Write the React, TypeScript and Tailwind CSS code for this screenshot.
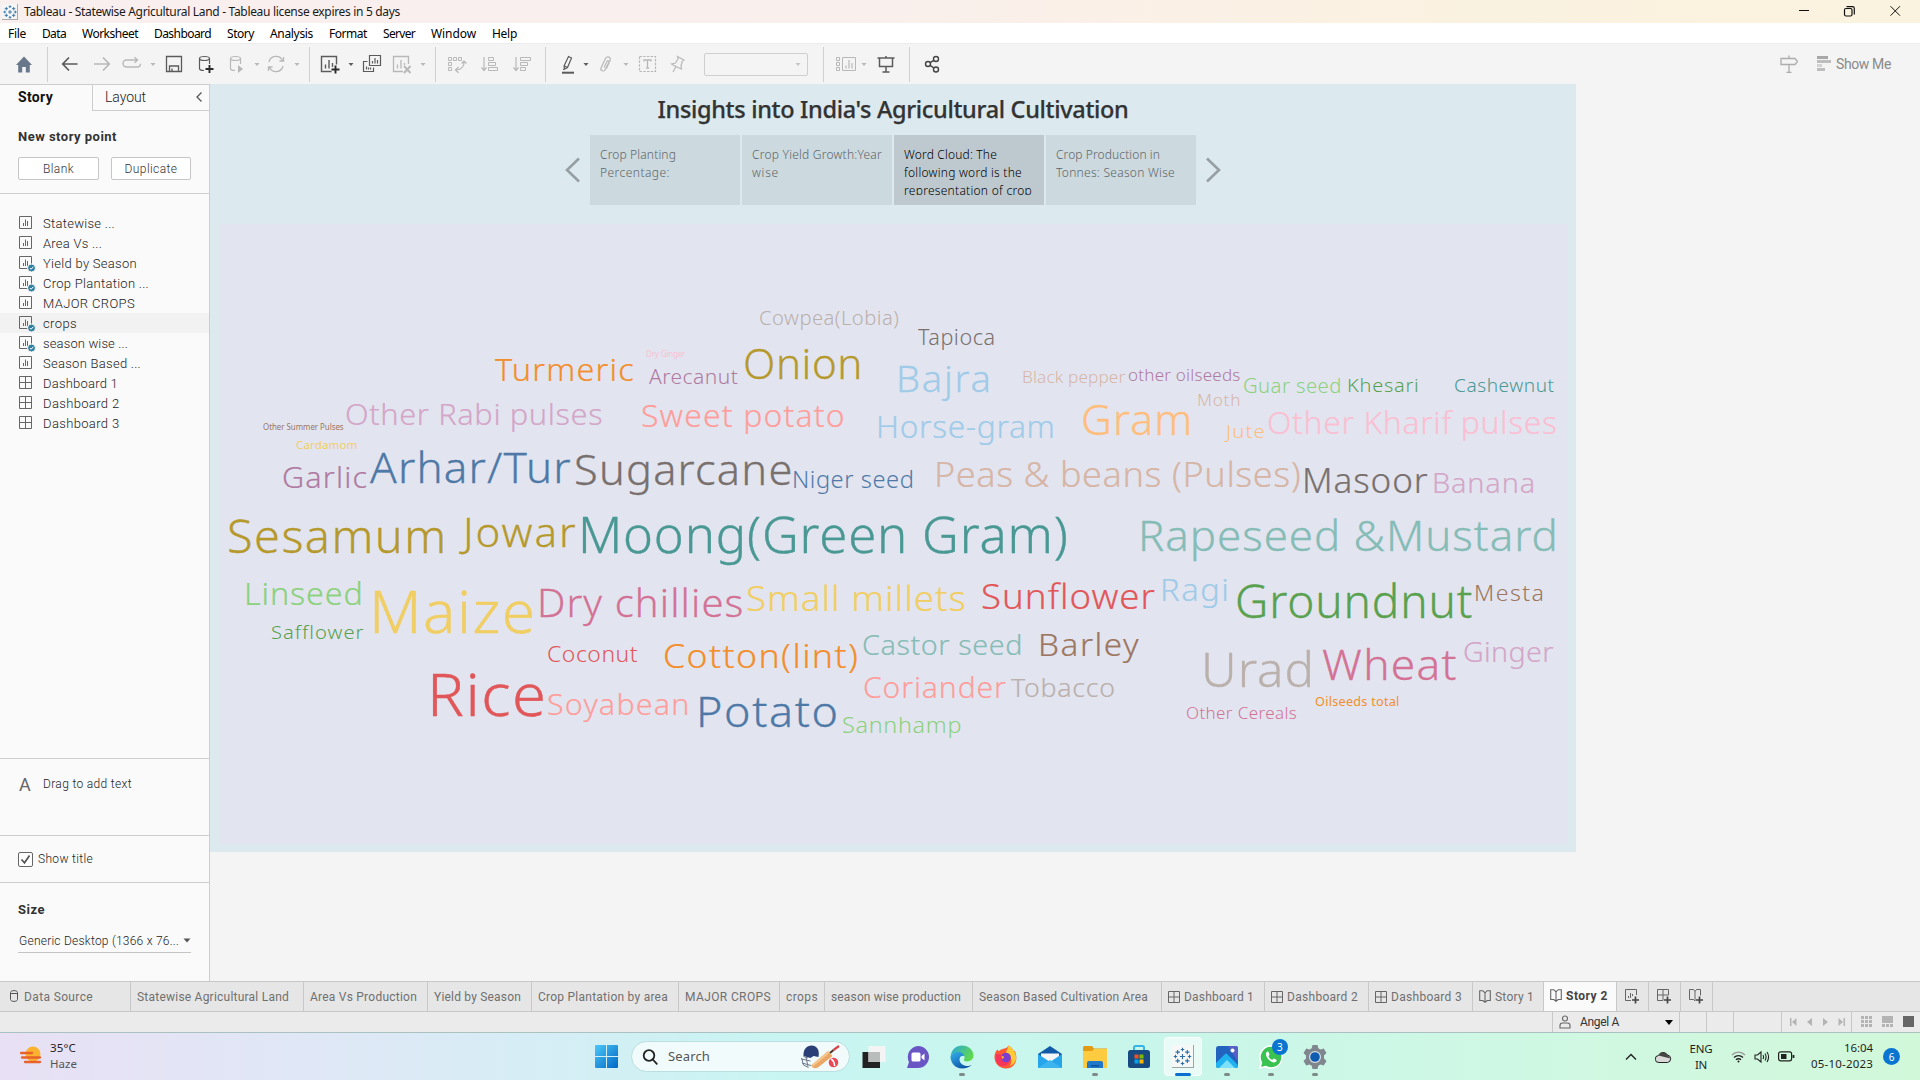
import React, { useLayoutEffect, useRef, useState } from "react";

/** Text tracked so that it fills exactly `w` pixels. */
function T({ w, className = "", children }: { w: number; className?: string; children: string }) {
  const ref = useRef<HTMLSpanElement>(null);
  const [ls, setLs] = useState(0);
  useLayoutEffect(() => {
    const el = ref.current;
    if (!el) return;
    el.style.letterSpacing = "0px";
    const nat = el.getBoundingClientRect().width;
    setLs((w - nat) / children.length);
  }, [w, children]);
  return (
    <span ref={ref} className={"inline-block w-max shrink-0 whitespace-pre " + className} style={{ letterSpacing: ls + "px" }}>
      {children}
    </span>
  );
}

/* ---------- word cloud ---------- */

type Word = [text: string, x0: number, x1: number, baseline: number, size: number, color: string];

const words: Word[] = [
  ["Cowpea(Lobia)", 759.6, 898, 325, 19.6, "#bab0ac"],
  ["Dry Ginger", 646, 686, 356.7, 8, "#fabfd2"],
  ["Turmeric", 495, 633, 381, 31, "#f28e2b"],
  ["Arecanut", 648.4, 737.2, 384, 20.5, "#b07aa1"],
  ["Onion", 744.4, 859, 379, 41.5, "#b6992d"],
  ["Other Rabi pulses", 346, 601.5, 425, 30, "#d4a6c8"],
  ["Sweet potato", 642, 843.5, 427, 30.5, "#ff9d9a"],
  ["Other Summer Pulses", 262.7, 343.5, 430, 8, "#9d7660"],
  ["Cardamom", 295.7, 356.4, 449, 11.5, "#f1ce63"],
  ["Garlic", 282.8, 366, 487, 29, "#b07aa1"],
  ["Arhar/Tur", 369.8, 570.7, 483, 42.5, "#4e79a7"],
  ["Sugarcane", 576, 790, 484.5, 42, "#79706e"],
  ["Niger seed", 794, 912, 488, 23, "#4e79a7"],
  ["Tapioca", 918, 993.8, 345, 21, "#79706e"],
  ["Bajra", 898.8, 988, 392, 36, "#a0cbe8"],
  ["Black pepper", 1023, 1125.5, 383, 17, "#d7b5a6"],
  ["other oilseeds", 1127.8, 1240.3, 381, 16.8, "#b07aa1"],
  ["Guar seed", 1243.4, 1339.8, 393, 19.8, "#8cd17d"],
  ["Khesari", 1347.4, 1416.6, 392, 19, "#59a14f"],
  ["Cashewnut", 1454.5, 1553.2, 392, 18.5, "#499894"],
  ["Moth", 1198.3, 1239.8, 406, 16.5, "#d7b5a6"],
  ["Horse-gram", 878.7, 1052.8, 438, 31, "#a0cbe8"],
  ["Gram", 1083, 1189, 435, 41.5, "#ffbe7d"],
  ["Jute", 1223.8, 1264, 438, 19, "#ffbe7d"],
  ["Other Kharif pulses", 1268, 1556.3, 434, 31, "#fabfd2"],
  ["Peas & beans (Pulses)", 936.7, 1299.6, 487, 35.3, "#d7b5a6"],
  ["Masoor", 1305, 1427, 493, 34.2, "#79706e"],
  ["Banana", 1434, 1533, 492, 28, "#d4a6c8"],
  ["Sesamum", 228.8, 442, 553, 45.5, "#b6992d"],
  ["Jowar", 458.7, 575.6, 547, 40, "#b6992d"],
  ["Moong(Green Gram)", 581.4, 1065.3, 554, 49.8, "#499894"],
  ["Rapeseed &Mustard", 1142, 1554, 552, 42.8, "#86bcb6"],
  ["Linseed", 247, 361, 605, 31.3, "#8cd17d"],
  ["Safflower", 272, 364, 639, 19, "#59a14f"],
  ["Maize", 373.8, 532.3, 633, 58.8, "#f1ce63"],
  ["Dry chillies", 539.5, 741.7, 617, 38.3, "#d37295"],
  ["Small millets", 747, 964, 611, 35.3, "#f1ce63"],
  ["Sunflower", 982, 1155, 609, 35.3, "#e15759"],
  ["Ragi", 1162.6, 1226, 601, 31, "#a0cbe8"],
  ["Groundnut", 1237, 1472, 617, 45, "#59a14f"],
  ["Mesta", 1476.4, 1542.5, 601, 21.7, "#9d7660"],
  ["Coconut", 548, 638, 662, 22.3, "#e15759"],
  ["Cotton(lint)", 665, 856.4, 668, 33.5, "#f28e2b"],
  ["Castor seed", 863, 1020.6, 654, 28, "#86bcb6"],
  ["Barley", 1040.7, 1138.5, 656, 31.3, "#9d7660"],
  ["Urad", 1205, 1310, 686, 48.3, "#bab0ac"],
  ["Wheat", 1322, 1456, 680, 43, "#d37295"],
  ["Ginger", 1463.5, 1552.8, 662, 28.3, "#d4a6c8"],
  ["Rice", 431.9, 542.6, 716, 59.7, "#e15759"],
  ["Soyabean", 548, 687, 714.5, 29, "#ff9d9a"],
  ["Potato", 700, 835.4, 727, 43, "#4e79a7"],
  ["Coriander", 863.6, 1005, 697, 29, "#ff9d9a"],
  ["Tobacco", 1010.4, 1113, 697, 26, "#bab0ac"],
  ["Sannhamp", 843, 960.8, 734, 22.7, "#8cd17d"],
  ["Other Cereals", 1186.7, 1295.6, 719, 16.5, "#d37295"],
  ["Oilseeds total", 1314.8, 1399, 706, 12.3, "#f28e2b"],
];

const measureCtx = document.createElement("canvas").getContext("2d")!;

/** A word whose ink spans x0..x1: part of the fit is glyph width, the rest tracking. */
function CloudWord({ word }: { word: Word }) {
  const [text, x0, x1, base, size, color] = word;
  const weight = size < 13 ? 400 : 300;
  measureCtx.font = `${weight} ${size}px "Noto Sans"`;
  const m = measureCtx.measureText(text);
  const ink = m.actualBoundingBoxLeft + m.actualBoundingBoxRight;
  const scale = 1 + ((x1 - x0) / ink - 1) * 0.4;
  const spacing = ((x1 - x0) / scale - ink) / (text.length - 1);
  return (
    <span
      className="absolute origin-left leading-none whitespace-pre"
      style={{
        left: x0 + 0.2 + m.actualBoundingBoxLeft * scale - 219,
        top: base + 0.5 - 0.888 * size - 224,
        fontSize: size,
        fontWeight: weight,
        letterSpacing: spacing,
        WebkitTextStroke: `${size > 24 ? size * 0.007 : 0}px ${color}`,
        transform: `scaleX(${scale})`,
        color,
      }}
    >
      {text}
    </span>
  );
}

/* ---------- toolbar ---------- */

const DARK = "#5b5b5b";
const DIM = "#b8b8b8";

function Ico({ c = DARK, className = "", children }: { c?: string; className?: string; children: React.ReactNode }) {
  return (
    <svg className={"shrink-0 " + className} width="20" height="20" viewBox="0 0 20 20" fill="none" stroke={c} strokeWidth="1.2">
      {children}
    </svg>
  );
}
const Sep = ({ className }: { className: string }) => <div className={"h-[35px] w-px shrink-0 bg-[#d0d0d0] " + className} />;
const Caret = ({ c = DIM, className }: { c?: string; className: string }) => (
  <svg className={"shrink-0 " + className} width="8" height="8" viewBox="0 0 8 8">
    <path d="M1.5 3h5L4 6z" fill={c} />
  </svg>
);

function Toolbar() {
  return (
    <div className="flex h-[41px] shrink-0 items-center border-t border-[#ececec] bg-[#f4f4f4]">
      <Ico className="ml-[14px]">
        <path d="M10 2.5 18 11h-2.200v7.500h-4V13H8.200v5.500h-4V11H2z" fill="#68788a" stroke="none" />
      </Ico>
      <Sep className="ml-[13px]" />
      <Ico className="ml-[12px]"><path d="M17.500 10H3M9 3.500 2.700 10 9 16.500" strokeWidth="1.700" /></Ico>
      <Ico c={DIM} className="ml-[12px]"><path d="M2 10h14.500M11 3.500 17.300 10 11 16.500" strokeWidth="1.700" /></Ico>
      <Ico c={DIM} className="ml-[10px]"><path d="M15 6H4.500a3 3 0 0 0 0 7h11a3 3 0 0 0 3-3.200M12.500 3.200l3 2.800-3 2.800" strokeWidth="1.400" /></Ico>
      <Caret className="ml-[7px]" />
      <Ico className="ml-[7px]">
        <path d="M2.500 2.500h15v15h-15zM5.500 17v-5h9v5M8 17v-2.500" strokeWidth="1.300" />
      </Ico>
      <Ico className="ml-[12px]">
        <ellipse cx="8.500" cy="4.500" rx="5" ry="2" />
        <path d="M3.500 4.500v10c0 1.200 2 2 4.500 2M13.500 4.500V10" />
        <path d="M13.500 11v8M9.500 15h8" stroke="#2b2b2b" strokeWidth="1.900" />
      </Ico>
      <Ico c={DIM} className="ml-[11px]">
        <ellipse cx="8.500" cy="4.500" rx="5" ry="2" />
        <path d="M3.500 4.500v10c0 1.200 2 2 4.500 2M13.500 4.500V10" />
        <path d="M11 11v8l5-4z" fill={DIM} stroke="none" />
      </Ico>
      <Caret className="ml-[6px]" />
      <Ico c={DIM} className="ml-[5px]">
        <path d="M3 8a7.200 7.200 0 0 1 13.500-1.500M17 12a7.200 7.200 0 0 1-13.500 1.500M17.500 3v4h-4M2.500 17v-4h4" strokeWidth="1.300" />
      </Ico>
      <Caret className="ml-[7px]" />
      <Sep className="ml-[8px]" />
      <Ico className="ml-[10px]">
        <path d="M11.500 17.500h-10v-15h15V10.500M5.500 14.500v-4M9 14.500V6M12.500 13V9" strokeWidth="1.400" />
        <path d="M15.500 11.500v8M11.500 15.500h8" stroke="#2b2b2b" strokeWidth="1.900" />
      </Ico>
      <Caret c={DARK} className="ml-[7px]" />
      <Ico className="ml-[7px]">
        <path d="M7.500 1.500h11v10h-11zM5.500 7.500h-4v10h10v-4M10.500 9.500V7M13 9.500v-5.500M15.500 9.500V6M4.500 15.500v-3M6.500 15.500v-2M8.500 15.500v-2" />
      </Ico>
      <Ico c={DIM} className="ml-[10px]">
        <path d="M11 17.500H1.500v-15h15V10M5.500 14.500v-4M9 14.500V6M12.500 11V9" strokeWidth="1.300" />
        <path d="m12 12 6.500 7M18.500 12 12 19" strokeWidth="1.900" />
      </Ico>
      <Caret className="ml-[7px]" />
      <Sep className="ml-[8px]" />
      <Ico c={DIM} className="ml-[11px]">
        <path d="M1.500 3.500h3v3h-3zM6.500 3.500h3v3h-3zM11.500 3.500h3v3h-3zM1.500 8.500h3v3h-3zM1.500 13.500h3v3h-3z" strokeWidth="1" />
        <path d="M17 7.500c.5 5-3 8.500-8.500 8.500M14.500 9.500 17 7l2.500 2.500M11.500 13 8.500 16l3 2.800" />
      </Ico>
      <Ico c={DIM} className="ml-[13px]">
        <path d="M4 3v13M1.500 13.500 4 16.500l2.500-3" />
        <path d="M8.500 3.500h5v3h-5zM8.500 8.500h7v3h-7zM8.500 13.500h9v3h-9z" strokeWidth="1" />
      </Ico>
      <Ico c={DIM} className="ml-[12px]">
        <path d="M4 3v13M1.500 13.500 4 16.500l2.500-3" />
        <path d="M8.500 3.500h10v3h-10zM8.500 8.500h7v3h-7zM8.500 13.500h5v3h-5z" strokeWidth="1" />
      </Ico>
      <Sep className="ml-[13px]" />
      <Ico className="ml-[12px]">
        <path d="M10.500 2.500l3 1.500-4 9.500-3 1.500-.5-3zM6.500 12l3 1.500M5 15.500l1.500-.5" />
        <path d="M4 18.700h12" strokeWidth="2" />
      </Ico>
      <Caret c={DARK} className="ml-[4px]" />
      <Ico c={DIM} className="ml-[5px]">
        <path d="M9 13.500l3-6c.8-1.500 2.500-.6 1.800.9l-3.600 7c-1.600 3-5.400 1.200-4-2L10.500 4.500c1.500-2.800 6-1.500 4.600 2l-3.800 8.300" />
      </Ico>
      <Caret className="ml-[7px]" />
      <Ico c={DIM} className="ml-[8px]">
        <path d="M1.500 2.500h16v15h-16z" strokeDasharray="2.500 1.200" />
        <path d="M6 7.500V6h7v1.500M9.500 6v8M8 14h3" strokeWidth="1.300" />
      </Ico>
      <Ico c={DIM} className="ml-[10px]">
        <path d="M9.500 2.500l6.500 3.500-1.800 1.200L13 12l.5 3-3.500-1.500L6 11.500 3.500 10l4-1 2.700-4.500zM8 12.500 5 18" />
      </Ico>
      <div className="ml-[16px] flex h-[23px] w-[104px] shrink-0 items-center justify-end rounded-[2px] border border-[#cfcfcf] pr-[5px]">
        <Caret c="#c4c4c4" className="" />
      </div>
      <Sep className="ml-[15px]" />
      <Ico c={DIM} className="ml-[12px]">
        <path d="M.5 3.500h3v3h-3zM.5 8.500h3v3h-3zM.5 13.500h3v3h-3zM6.500 3.500h13v13h-13z" strokeWidth="1" />
        <path d="M10 14.500v-3M13 14.500V6M16 14.500V9" />
      </Ico>
      <Caret className="ml-[4px]" />
      <Ico className="ml-[8px]">
        <path d="M10 2v2M1.500 4h17M3.500 4v8.500h13V4M10 12.500V18M6.500 18h7" strokeWidth="1.500" />
      </Ico>
      <Sep className="ml-[13px]" />
      <Ico className="ml-[12px]">
        <g stroke="#444" strokeWidth="1.400">
          <circle cx="6" cy="10" r="2.500" />
          <circle cx="14" cy="5" r="2.500" />
          <circle cx="14" cy="15.500" r="2.500" />
          <path d="m8.200 8.700 3.600-2.300M8.200 11.400l3.600 2.600" />
        </g>
      </Ico>
      <div className="ml-auto flex items-center pr-[29px]">
        <Ico c="#adadad" className="">
          <path d="M10 1.500V4M2 4.500h14l2.500 3-2.500 3H2zM10 10.500V18M7.500 18.300h5" strokeWidth="1.300" />
        </Ico>
        <svg className="ml-[18px]" width="14" height="16" viewBox="0 0 14 16" fill="#bdbdbd">
          <path d="M0 0h11v3H0z" fill="#a8a8a8" /><path d="M0 4h14v3H0zM0 12h8v3H0z" /><path d="M0 8h5v3H0z" fill="#d2d2d2" />
        </svg>
        <T w={55} className="ml-[5px] font-['Roboto','Liberation_Sans',sans-serif] text-[14px] text-[#8a8a8a]">Show Me</T>
      </div>
    </div>
  );
}

/* ---------- sidebar ---------- */

function SheetIcon({ grid, check }: { grid?: boolean; check?: boolean }) {
  return (
    <svg className="ml-[19px] shrink-0 overflow-visible" width="16" height="16" viewBox="0 0 16 16" fill="none" stroke="#666">
      <path d="M.5 1.500h12v12H.5z" />
      {grid ? <path d="M6.500 1.500v12M.5 7.500h12" /> : <path d="M4.500 11V8M6.500 11V4.500M8.500 11V6" />}
      {check && (
        <g>
          <circle cx="12.500" cy="13" r="4" fill="#2f7f9f" stroke="#fafafa" />
          <path d="m10.800 13 1.300 1.300 2.300-2.600" stroke="#fff" />
        </g>
      )}
    </svg>
  );
}

const sheets: { name: string; w: number; grid?: boolean; check?: boolean; on?: boolean }[] = [
  { name: "Statewise ...", w: 72 },
  { name: "Area Vs ...", w: 59 },
  { name: "Yield by Season", w: 94, check: true },
  { name: "Crop Plantation ...", w: 106, check: true },
  { name: "MAJOR CROPS", w: 92 },
  { name: "crops", w: 34, check: true, on: true },
  { name: "season wise ...", w: 85, check: true },
  { name: "Season Based ...", w: 98 },
  { name: "Dashboard 1", w: 75, grid: true },
  { name: "Dashboard 2", w: 76.5, grid: true },
  { name: "Dashboard 3", w: 76.5, grid: true },
];

function Sidebar() {
  return (
    <aside className="flex w-[210px] shrink-0 flex-col border-t border-r border-[#cdcdcd] bg-[#fafafa] font-['Roboto','Liberation_Sans',sans-serif] font-light text-[#222]">
      <div className="flex h-[26px] shrink-0">
        <div className="flex w-[92px] items-center pb-[2px] pl-[18px]">
          <T w={35} className="text-[14px] font-bold text-[#111]">Story</T>
        </div>
        <div className="flex flex-1 items-center border-b border-l border-[#cdcdcd] pb-px pl-[12px]">
          <T w={41} className="text-[14px]">Layout</T>
          <svg className="ml-[49px] shrink-0" width="8" height="12" viewBox="0 0 8 12" fill="none" stroke="#555" strokeWidth="1.300">
            <path d="M6.500 1.500 2 6l4.500 4.500" />
          </svg>
        </div>
      </div>
      <div className="flex h-[83px] shrink-0 flex-col border-b border-[#cdcdcd] px-[18px] pt-[16px]">
        <T w={99} className="h-[20px] text-[13px] leading-[20px] font-bold text-[#333]">New story point</T>
        <div className="mt-[10px] flex justify-between text-[12px] text-[#333]">
          <button className="h-[23px] w-[81px] rounded-[2px] border border-[#c6c6c6] bg-white"><T w={31}>Blank</T></button>
          <button className="h-[23px] w-[80px] rounded-[2px] border border-[#c6c6c6] bg-white"><T w={53}>Duplicate</T></button>
        </div>
      </div>
      <div className="flex flex-1 flex-col pt-[19px]">
        {sheets.map((s) => (
          <div key={s.name} className={"flex h-[20px] shrink-0 items-center " + (s.on ? "bg-[#f2f2f2]" : "")}>
            <SheetIcon grid={s.grid} check={s.check} />
            <T w={s.w} className="ml-[8px] pt-[2px] text-[13px] leading-[18px]">{s.name}</T>
          </div>
        ))}
      </div>
      <div className="flex h-[77px] shrink-0 items-start border-t border-[#cdcdcd] pt-[16px] pl-[19px]">
        <span className="w-[24px] text-[18px] leading-[20px] font-normal text-[#666]">A</span>
        <T w={89} className="text-[12px] leading-[18px]">Drag to add text</T>
      </div>
      <div className="flex h-[47px] shrink-0 items-center border-t border-[#cdcdcd] pl-[18px]">
        <div className="grid h-[15px] w-[15px] place-items-center rounded-[2px] border border-[#666] bg-white">
          <svg width="11" height="11" viewBox="0 0 11 11" fill="none" stroke="#555" strokeWidth="1.700"><path d="m1.500 5.500 3 3.300L9.500 1.500" /></svg>
        </div>
        <T w={55} className="ml-[5px] text-[12px]">Show title</T>
      </div>
      <div className="flex h-[99px] shrink-0 flex-col border-t border-[#cdcdcd] px-[18px] pt-[16px]">
        <T w={27} className="h-[20px] text-[13px] leading-[22px] font-bold text-[#333]">Size</T>
        <div className="mt-[10px] flex h-[24px] w-[173px] items-center justify-between border-b border-[#c4c4c4]">
          <T w={161} className="pl-px text-[12px]">Generic Desktop (1366 x 76...</T>
          <svg width="8" height="5" viewBox="0 0 8 5"><path d="M.5.5h7L4 4.500z" fill="#555" /></svg>
        </div>
      </div>
    </aside>
  );
}

/* ---------- story ---------- */

function Point({ lines, on }: { lines: [string, number][]; on?: boolean }) {
  return (
    <div className={"h-[70px] w-[150px] pt-[11px] pl-[10px] " + (on ? "bg-[#bdc9cf] text-black" : "bg-[#ccd9de] text-[#5d666a]")}>
      <div className="flex h-[49px] flex-col items-start overflow-hidden text-[12px] leading-[18px] font-light">
        {lines.map(([t, w]) => (
          <T key={t} w={w}>{t}</T>
        ))}
      </div>
    </div>
  );
}

function StoryView() {
  return (
    <div className="flex h-[768px] w-[1366px] flex-col bg-[#dceaef] font-['Noto_Sans','Open_Sans',sans-serif]">
      <div className="flex h-[51px] w-full shrink-0 justify-center pt-[8px]">
        <T w={471} className="text-[23.500px] leading-[34px] font-medium text-[#333] [-webkit-text-stroke:0.25px_#333]">Insights into India's Agricultural Cultivation</T>
      </div>
      <div className="flex h-[89px] shrink-0 items-start justify-center">
        <svg className="mt-[21px] mr-[9px]" width="16" height="28" viewBox="0 0 16 28" fill="none" stroke="#969fa3" strokeWidth="2.600"><path d="M14 2.500 2 14l12 11.500" /></svg>
        <div className="flex gap-[2px]">
          <Point lines={[["Crop Planting", 76], ["Percentage:", 70]]} />
          <Point lines={[["Crop Yield Growth:Year", 130], ["wise", 27]]} />
          <Point on lines={[["Word Cloud: The", 93], ["following word is the", 118], ["representation of crop", 128]]} />
          <Point lines={[["Crop Production in", 104], ["Tonnes: Season Wise", 119]]} />
        </div>
        <svg className="mt-[21px] ml-[9px]" width="16" height="28" viewBox="0 0 16 28" fill="none" stroke="#969fa3" strokeWidth="2.600"><path d="M2 2.500 14 14 2 25.500" /></svg>
      </div>
      <div className="relative ml-[9px] h-[620px] w-[1349px] shrink-0 bg-[#e2e5f0]">
        {words.map((w) => (
          <CloudWord key={w[0]} word={w} />
        ))}
      </div>
    </div>
  );
}

/* ---------- sheet tabs and status bar ---------- */

const GridGlyph = () => (
  <svg width="12" height="12" viewBox="0 0 12 12" fill="none" stroke="#666"><path d="M.5.5h11v11H.5zM6 .5v11M.5 6h11" /></svg>
);
const BookGlyph = () => (
  <svg width="12" height="13" viewBox="0 0 12 13" fill="none" stroke="#666" strokeWidth="1.100"><path d="M6 2.800 4.300 1.200 3.800.7H.7v9.800h3.100L6 12.300l2.200-1.800h3.100V.7H8.200zM6 2.800v9.500" /></svg>
);
const Plus = () => <path d="M10.500 7.500v7M7 11h7" stroke="#444" strokeWidth="1.700" />;

function Tab({ width, w, icon, on, children }: { width: string; w: number; icon?: React.ReactNode; on?: boolean; children: string }) {
  return (
    <div className={"flex h-full shrink-0 items-center gap-[4px] border-r border-[#c8c8c8] pl-[6px] " + width + (on ? " bg-[#fafafa] pb-[2px] font-bold text-[#444]" : "")}>
      {icon}
      <T w={w}>{children}</T>
    </div>
  );
}

function SheetTabs() {
  return (
    <div className="flex h-[31px] shrink-0 items-center border-y border-[#c8c8c8] bg-[#e6e6e6] font-['Roboto','Liberation_Sans',sans-serif] text-[12px] text-[#707070]">
      <div className="flex h-full w-[131px] items-center gap-[6px] border-r border-[#c8c8c8] pl-[10px]">
        <svg className="-mt-[2px]" width="8" height="12" viewBox="0 0 8 12" fill="none" stroke="#555"><path d="M.5 2.500c0-2.500 7-2.500 7 0v7c0 2.500-7 2.500-7 0zM.5 3.500h7" /></svg>
        <T w={69}>Data Source</T>
      </div>
      <Tab width="w-[173px]" w={152}>Statewise Agricultural Land</Tab>
      <Tab width="w-[124px]" w={107}>Area Vs Production</Tab>
      <Tab width="w-[104px]" w={87}>Yield by Season</Tab>
      <Tab width="w-[147px]" w={130}>Crop Plantation by area</Tab>
      <Tab width="w-[101px]" w={86}>MAJOR CROPS</Tab>
      <Tab width="w-[45px]" w={32}>crops</Tab>
      <Tab width="w-[148px]" w={130}>season wise production</Tab>
      <Tab width="w-[189px]" w={169}>Season Based Cultivation Area</Tab>
      <Tab width="w-[103px]" w={70} icon={<GridGlyph />}>Dashboard 1</Tab>
      <Tab width="w-[104px]" w={71} icon={<GridGlyph />}>Dashboard 2</Tab>
      <Tab width="w-[104px]" w={71} icon={<GridGlyph />}>Dashboard 3</Tab>
      <Tab width="w-[71px]" w={39} icon={<BookGlyph />}>Story 1</Tab>
      <Tab on width="w-[73px]" w={42} icon={<BookGlyph />}>Story 2</Tab>
      <div className="grid h-full w-[32px] place-items-center border-r border-[#c8c8c8]">
        <svg width="15" height="15" viewBox="0 0 15 15" fill="none" stroke="#666"><path d="M6 11.500H.5V.5h11V6M3.500 9V7M5.500 9V4M7.500 7V5" /><Plus /></svg>
      </div>
      <div className="grid h-full w-[32px] place-items-center border-r border-[#c8c8c8]">
        <svg width="15" height="15" viewBox="0 0 15 15" fill="none" stroke="#666"><path d="M6 11.500H.5V.5h11V6M.5 6h11M6 .5v11" /><Plus /></svg>
      </div>
      <div className="grid h-full w-[32px] place-items-center border-r border-[#c8c8c8]">
        <svg width="15" height="15" viewBox="0 0 15 15" fill="none" stroke="#666"><path d="M6 2.500 4.500.5H.5v10h4L6 12V2.500L7.500.5h4v6" /><Plus /></svg>
      </div>
    </div>
  );
}

function StatusBar() {
  return (
    <div className="flex h-[20px] shrink-0 justify-end bg-[#ebebeb]">
      <div className="flex w-[128px] items-center border-x border-[#c8c8c8] pr-[6px] pl-[6px] text-[#333]">
        <svg width="12" height="14" viewBox="0 0 12 14" fill="none" stroke="#666" strokeWidth="1.100"><circle cx="6" cy="3.500" r="2.500" /><path d="M1 13V10.500q0-2.500 2.500-2.500h5q2.500 0 2.500 2.500V13z" /></svg>
        <T w={39} className="ml-[9px] font-['Roboto','Liberation_Sans',sans-serif] text-[12px]">Angel A</T>
        <svg className="ml-auto" width="8" height="5" viewBox="0 0 8 5"><path d="M0 0h8L4 5z" /></svg>
      </div>
      <div className="w-[27px] border-r border-[#c8c8c8]" />
      <div className="w-[27px] border-r border-[#c8c8c8]" />
      <div className="w-[48px] border-r border-[#c8c8c8]" />
      <div className="flex w-[70px] items-center gap-[10px] border-r border-[#c8c8c8] pl-[8px] text-[#b4b4b4]">
        <svg width="7" height="8" viewBox="0 0 7 8" fill="currentColor"><path d="M0 0h1.500v8H0zM6.500 0v8L2 4z" /></svg>
        <svg width="5" height="8" viewBox="0 0 5 8" fill="currentColor"><path d="M5 0v8L0 4z" /></svg>
        <svg className="ml-px" width="5" height="8" viewBox="0 0 5 8" fill="currentColor"><path d="M0 0v8l5-4z" /></svg>
        <svg width="7" height="8" viewBox="0 0 7 8" fill="currentColor"><path d="M5.500 0H7v8H5.500zM.5 0v8L5 4z" /></svg>
      </div>
      <div className="flex w-[68px] items-center gap-[10px] pb-px pl-[9px]">
        <svg width="11" height="11" viewBox="0 0 11 11" fill="#b4b4b4"><path d="M0 0h3v3H0zM4 0h3v3H4zM8 0h3v3H8zM0 4h3v3H0zM4 4h3v3H4zM8 4h3v3H8zM0 8h3v3H0zM4 8h3v3H4zM8 8h3v3H8z" /></svg>
        <svg width="11" height="11" viewBox="0 0 11 11" fill="#b4b4b4"><path d="M0 0h11v7H0zM0 8h3v3H0zM4 8h3v3H4zM8 8h3v3H8z" /></svg>
        <div className="h-[11px] w-[11px] bg-[#666]" />
      </div>
    </div>
  );
}

/* ---------- desktop taskbar ---------- */

function TableauMark({ size }: { size: number }) {
  return (
    <svg width={size} height={size} viewBox="0 0 24 24" stroke="#2f6fa3" strokeWidth="1.300">
      <path d="M12 9v6M9 12h6M12 2v4M10 4h4M12 18v4M10 20h4M4 10v4M2 12h4M20 10v4M18 12h4M6.500 4.500v5M4 7h5M17.500 4.500v5M15 7h5M6.500 14.500v5M4 17h5M17.500 14.500v5M15 17h5" />
    </svg>
  );
}

function App24({ children, run, active }: { children: React.ReactNode; run?: boolean; active?: boolean }) {
  return (
    <div className="relative flex h-[48px] w-[44.100px] shrink-0 items-center justify-center">
      <div className={"relative grid h-[39px] w-[38px] place-items-center rounded-[4px] " + (active ? "border border-white/60 bg-white/60" : "")}>
        {children}
      </div>
      {run && <div className="absolute bottom-[5px] h-[3px] w-[6px] rounded-full bg-[#7d8b88]" />}
      {active && <div className="absolute bottom-[5px] h-[3px] w-[16px] rounded-full bg-[#0a6fd0]" />}
    </div>
  );
}
const S = ({ children }: { children: React.ReactNode }) => (
  <svg width="24" height="24" viewBox="0 0 24 24" fill="none">{children}</svg>
);

function Taskbar() {
  return (
    <div className="flex h-[48px] shrink-0 items-center border-t border-[#abc0c0] bg-[linear-gradient(90deg,#e8e0f4_0px,#dfe8f6_330px,#d5eef5_560px,#c8f5f2_780px,#c9f6ea_1150px,#cff8e4_1500px,#d2f8da_1920px)] font-['Noto_Sans','Open_Sans',sans-serif] text-[#1f1f1f]">
      <svg className="ml-[20px] shrink-0" width="22" height="24" viewBox="0 0 22 24" fill="none">
        <circle cx="13" cy="9" r="7.500" fill="#fbb22e" />
        <path d="M1 8h11M2 12.500h18M5 17h15" stroke="#e8622c" strokeWidth="2.300" strokeLinecap="round" />
      </svg>
      <div className="-mt-px ml-[8px] flex w-[80px] shrink-0 flex-col text-[11.500px] leading-[16px]">
        <T w={26}>35°C</T>
        <T w={27} className="text-[#555]">Haze</T>
      </div>
      <svg className="ml-[465px] shrink-0" width="23" height="23" viewBox="0 0 23 23">
        <defs><linearGradient id="win" x1="0" y1="0" x2="1" y2="1"><stop stopColor="#4cc8f8" /><stop offset="1" stopColor="#0067c6" /></linearGradient></defs>
        <path d="M0 1q0-1 1-1h10v11H0zM12 0h10q1 0 1 1v10H12zM0 12h11v11H1q-1 0-1-1zM12 12h11v10q0 1-1 1H12z" fill="url(#win)" />
      </svg>
      <div className="ml-[13px] flex h-[31px] w-[219px] shrink-0 items-center rounded-full border border-[#b9dfe0] bg-[#f1fbfc] pl-[10px]">
        <svg className="shrink-0" width="16" height="16" viewBox="0 0 16 16" fill="none" stroke="#222" strokeWidth="1.800"><circle cx="7" cy="6.500" r="5.300" /><path d="m10.800 10.500 4 4.300" strokeLinecap="round" /></svg>
        <T w={42} className="ml-[10px] text-[13px] text-[#555]">Search</T>
        <svg className="ml-[90px] shrink-0" width="42" height="26" viewBox="0 0 42 26" fill="none">
          <path d="M3.500 12C3 5 7 1.500 11.500 1.500c5 0 8.500 4 7 11.500l-5-1-3 2z" fill="#2b3f77" />
          <path d="M3.500 12.500 8 14M1.500 15l9 2M2 19l9 2.500M1.500 14l2 7 5 2.500M6 13.500l2 9" stroke="#6d7688" />
          <path d="M11 21.500 28 7l4.500 5L18 23.500q-5 2-7-2z" fill="#eba765" />
          <path d="m11.500 21 17-14 1.500 1.500-17 14z" fill="#f6c890" />
          <path d="m30 9 3.500-3" stroke="#4a3326" strokeWidth="2" />
          <path d="M33.500 6 39 2" stroke="#d8424a" strokeWidth="2.200" />
          <circle cx="33.500" cy="18.500" r="4.800" fill="#ea4a56" />
          <path d="M31 15c2.500 1.500 3.500 4 3.700 7" stroke="#fff" strokeWidth="1.500" />
        </svg>
      </div>
      <div className="ml-[2px] flex shrink-0">
        <App24><S>
          <path d="M.5 7h17.500v16H.5z" fill="#222" /><path d="M6.500 1h17v16h-17z" fill="#f4f4f4" /><path d="M6.500 7H18v10H6.500z" fill="#b9bdbc" />
        </S></App24>
        <App24><S>
          <path d="M12 1a11 11 0 0 1 0 22H1l2-6A11 11 0 0 1 12 1z" fill="#6a55c4" /><rect x="5.500" y="7.500" width="9" height="9" rx="1.500" fill="#fff" /><path d="m15.500 11 3-2.500v7l-3-2.500z" fill="#fff" />
        </S></App24>
        <App24 run><S>
          <defs>
            <linearGradient id="edge" x1="0" y1="0" x2="1" y2=".5"><stop stopColor="#2aa7e0" /><stop offset="1" stopColor="#5fd84e" /></linearGradient>
            <linearGradient id="edge2" x1="0" y1="0" x2=".7" y2="1"><stop stopColor="#35b5ee" /><stop offset="1" stopColor="#0c50a4" /></linearGradient>
          </defs>
          <path d="M.5 11.500C2 7 6 5.500 9.500 6.500c3 .8 5 3 5.500 5-2.500-2-5.500 0-5.500 3 0 4 4 6.500 8 6.500 1.500 0 3-.5 4-1-2 2.300-5.500 3.500-9.500 3.500C5.500 23.500.5 18 .5 11.500z" fill="url(#edge2)" />
          <path d="M.6 11C1.500 4.500 6.500.5 12 .5c6.500 0 11.500 4.800 11.500 9.800 0 4-3 6.200-6.500 6.200-2.500 0-3.500-1-3-2 1.800-3-.5-7-5-7.500-4-.3-7 1.500-8.400 4z" fill="url(#edge)" />
        </S></App24>
        <App24><S>
          <path d="M12 3c2-1 2.500-2.500 2.500-2.500C18 3 19 4 19.500 6c1 .3 1-.5 1-.5C25 14 21 23.500 12 23.500 5 23.500.5 18 .5 12.500.5 8 2 6 3.500 4.500 4 6 4.500 6 5 6c2-2 5-2.500 7-3z" fill="#ff5a35" />
          <path d="M14.500.5C18 3 23 8 22 14.500c-1.500 4-4 6-6 6.500 3-5 1-11-4-13 0-3 2.500-5 2.500-7.500z" fill="#ffca34" />
          <path d="M2 9.500c2-1 5 0 6 1.500 3 0 3 2 0 3 1 4 6 3 8 1-1 4.500-5 7-9 6-4-1-6-6-5-11.500z" fill="#f5365a" />
          <circle cx="12" cy="12.500" r="4.800" fill="#7a3fd0" /><path d="M7.500 11c3 0 3.500 2 .5 3z" fill="#ffae34" />
        </S></App24>
        <App24><S>
          <path d="M0 9 12 1l12 8v14H0z" fill="#0f5ba8" /><path d="M3 8.500h18v8H3z" fill="#f2f6f8" /><path d="m0 9 12 8L24 9v14H0z" fill="#27a5ea" /><path d="m0 23 12-8 12 8z" fill="#3db4ee" />
        </S></App24>
        <App24 run><S>
          <path d="M0 2.500Q0 1 1.500 1H9l2 2.500H24V12H0z" fill="#e29b12" /><path d="M0 6h9l2-2h13v18q0 1-1 1H1q-1 0-1-1z" fill="#fccb3f" /><path d="M4 23v-5q0-2 2-2h12q2 0 2 2v5z" fill="#1f78c9" /><path d="M8 20h8v1.500H8z" fill="#0d539c" />
        </S></App24>
        <App24><S>
          <path d="M7 6V2.500Q7 1 8.500 1h7Q17 1 17 2.500V6" stroke="#35b3ec" strokeWidth="2" /><rect x="1" y="5" width="22" height="18" rx="2.500" fill="#174a80" />
          <path d="M7.500 9.500h4v4h-4z" fill="#f25022" /><path d="M12.500 9.500h4v4h-4z" fill="#7fba00" /><path d="M7.500 14.500h4v4h-4z" fill="#00a4ef" /><path d="M12.500 14.500h4v4h-4z" fill="#ffb900" />
        </S></App24>
        <App24 active>
          <div className="grid h-[23px] w-[22px] place-items-center border-r border-b border-[#9aa7a7] bg-[#f6f8f8]"><TableauMark size={21} /></div>
        </App24>
        <App24 run><S>
          <rect x="1" y="1" width="22" height="22" rx="2.500" fill="#2263c0" /><path d="M13 1h8q2 0 2 2v14z" fill="#5a5fc8" /><circle cx="17.500" cy="5.500" r="2" fill="#fff" />
          <path d="m1 18 9-9q1-1 2 0l11 11v1q0 2-2 2H3q-2 0-2-2z" fill="#1fb2ee" /><path d="m4 23 8-8 8 8z" fill="#7fe0fb" />
        </S></App24>
        <App24 run>
          <S>
            <path d="M12 1a11 11 0 1 1-5.500 20.500L1 23l1.500-5.500A11 11 0 0 1 12 1z" fill="#3ac351" stroke="#fff" strokeWidth="1.500" />
            <path d="M8.500 6.500c-3 1.500-1 6 1 8s6 4.500 8 1.500c.5-1-.5-1.500-2.500-2.500-1 0-1 1.500-2 1.300-1.500-.5-3-2-3.500-3.500 0-.8 1-1 1-1.800-.5-1.500-1-3.200-2-3z" fill="#fff" />
          </S>
          <div className="absolute top-[2px] right-[2px] grid h-[16px] w-[16px] place-items-center rounded-full bg-[#0a75d1] text-[10px] leading-none text-white">3</div>
        </App24>
        <App24 run><S>
          <path d="M9.500 0h5l.8 3.300 2.200 1.200 3.200-1L23.500 8 21 10.500v3l2.500 2.500-2.800 4.500-3.200-1-2.200 1.200-.8 3.300h-5l-.8-3.300-2.200-1.200-3.200 1L.5 16 3 13.500v-3L.5 8l2.800-4.500 3.200 1 2.200-1.200z" fill="#7f868d" />
          <circle cx="12" cy="12" r="6" fill="#d9e2e6" /><circle cx="12" cy="12" r="4.800" fill="#0f5cb0" />
        </S></App24>
      </div>
      <svg className="mr-px ml-auto" width="12" height="8" viewBox="0 0 12 8" fill="none" stroke="#222" strokeWidth="1.400"><path d="m1 6.500 5-5 5 5" /></svg>
      <svg className="ml-[17px]" width="17" height="12" viewBox="0 0 17 12"><path d="M4 11.500a3.500 3.500 0 0 1-.5-7A5 5 0 0 1 12.500 4a3.800 3.800 0 0 1 0 7.500z" fill="#d9d9d9" stroke="#222" /><path d="M3.500 4.500A5 5 0 0 1 12.500 4l3 3.500z" fill="#444" /></svg>
      <div className="ml-[17px] flex w-[24px] flex-col items-center text-[11.500px] leading-[16px]"><T w={23}>ENG</T><T w={12}>IN</T></div>
      <svg className="ml-[18px]" width="15" height="13" viewBox="0 0 15 13" fill="none" stroke="#222" strokeWidth="1.300">
        <path d="M1 5a9 9 0 0 1 13 0" stroke="#999" /><path d="M3 7.500a6.300 6.300 0 0 1 9 0M5 9.800a3.500 3.500 0 0 1 5 0" /><circle cx="7.500" cy="11.500" r="1" fill="#222" stroke="none" />
      </svg>
      <svg className="ml-[8px]" width="16" height="14" viewBox="0 0 16 14" fill="none" stroke="#222" strokeWidth="1.100"><path d="M1 5v4h2.500L7 12V2L3.500 5zM9 5q1.200 2 0 4M11 3.500q2.200 3.500 0 7M13 2q3.200 5 0 10" /></svg>
      <svg className="ml-[8px]" width="17" height="11" viewBox="0 0 17 11" fill="none" stroke="#222" strokeWidth="1.200"><rect x=".6" y=".8" width="13" height="9" rx="2" /><path d="M3 3h5.500v5H3z" fill="#222" stroke="none" /><path d="M15.500 4v3" strokeWidth="1.800" /></svg>
      <div className="-mt-px ml-[16px] flex w-[62px] flex-col items-end text-[11.500px] leading-[16px]"><T w={29}>16:04</T><T w={62}>05-10-2023</T></div>
      <div className="mr-[20px] ml-[10px] grid h-[17px] w-[17px] place-items-center rounded-full bg-[#0a75d1] text-[10px] leading-none text-white">6</div>
    </div>
  );
}

export default function App() {
  return (
    <div className="flex h-[1080px] w-[1920px] flex-col overflow-hidden bg-[#f4f4f4]">
      <div className="flex h-[23px] shrink-0 items-center bg-[linear-gradient(90deg,#f9efef_0px,#f9efed_850px,#faf0e8_1060px,#faf2e0_1500px,#faf3df_1920px)] font-['Noto_Sans','Open_Sans',sans-serif] text-[#1a1a1a]">
        <div className="ml-[2px] grid h-[16px] w-[16px] shrink-0 place-items-center border-r border-b border-[#aaa] bg-[#f5f5f5]"><TableauMark size={16} /></div>
        <T w={376} className="ml-[6px] text-[12px]">Tableau - Statewise Agricultural Land - Tableau license expires in 5 days</T>
        <svg className="mr-[17px] -mb-px ml-auto" width="104" height="12" viewBox="0 0 104 12" fill="none" stroke="#111">
          <path d="M0 4.500h10" /><rect x="45.500" y="2.500" width="7.500" height="7.500" rx="1.500" strokeWidth="1.200" /><path d="M47.500.6h6q1.800 0 1.800 1.800v6" strokeWidth="1.200" />
          <path d="m91.500.2 9.500 9.500M101 .2l-9.500 9.500" />
        </svg>
      </div>
      <div className="flex h-[20px] shrink-0 items-center gap-[16px] bg-white pt-px pl-[8px] font-['Noto_Sans','Open_Sans',sans-serif] text-[12px] text-black">
        <T w={18}>File</T><T w={24}>Data</T><T w={56}>Worksheet</T><T w={57}>Dashboard</T><T w={27}>Story</T><T w={43}>Analysis</T><T w={38}>Format</T><T w={32}>Server</T><T w={45}>Window</T><T w={25}>Help</T>
      </div>
      <Toolbar />
      <div className="flex min-h-0 flex-1">
        <Sidebar />
        <StoryView />
      </div>
      <SheetTabs />
      <StatusBar />
      <Taskbar />
    </div>
  );
}
